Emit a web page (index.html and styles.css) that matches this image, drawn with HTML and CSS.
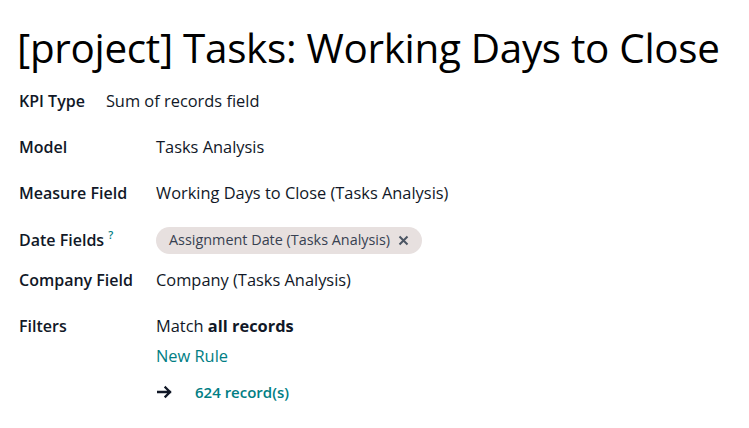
FILE: index.html
```html
<!DOCTYPE html>
<html>
<head>
<meta charset="utf-8">
<link rel="stylesheet" href="styles.css">
</head>
<body>
<div class="sheet">
  <h1 class="title">[project] Tasks: Working Days to Close</h1>
  <div class="kpi-row">
    <span class="label">KPI Type</span>
    <span class="value">Sum of records field</span>
  </div>
  <div class="fields">
    <div class="row">
      <div class="label">Model</div>
      <div class="value">Tasks Analysis</div>
    </div>
    <div class="row">
      <div class="label">Measure Field</div>
      <div class="value">Working Days to Close (Tasks Analysis)</div>
    </div>
    <div class="row row-tags">
      <div class="label">Date Fields <sup class="help">?</sup></div>
      <div class="value">
        <span class="tag">Assignment Date (Tasks Analysis) <svg class="tag-x" width="11" height="11" viewBox="0 0 11 11"><path d="M1.5 1.5L9.5 9.5M9.5 1.5L1.5 9.5" stroke="#4b5563" stroke-width="2" fill="none"/></svg></span>
      </div>
    </div>
    <div class="row">
      <div class="label">Company Field</div>
      <div class="value">Company (Tasks Analysis)</div>
    </div>
    <div class="row row-filters">
      <div class="label">Filters</div>
      <div class="value filters">
        <div>Match <b>all records</b></div>
        <div class="link new-rule">New Rule</div>
        <div class="count">
          <svg class="arrow" width="15" height="14" viewBox="0 0 15 14"><path d="M1 7H13M8.5 2.5L13 7L8.5 11.5" fill="none" stroke="#111827" stroke-width="2.3" stroke-linecap="square"/></svg>
          <span class="link count-text">624 record(s)</span>
        </div>
      </div>
    </div>
  </div>
</div>
</body>
</html>
```
FILE: styles.css
```css
html, body {
  margin: 0;
  padding: 0;
  background: #ffffff;
}
body {
  font-family: "Open Sans", "Noto Sans", sans-serif;
  color: #111827;
  font-size: 16.4px;
}
.sheet {
  padding: 24px 0 0 19px;
}
.title {
  margin: 0 0 18px -2px;
  font-weight: 400;
  font-size: 40.4px;
  line-height: 48px;
  letter-spacing: -0.3px;
  color: #000;
}
.kpi-row {
  display: flex;
  gap: 21px;
  align-items: center;
  height: 22px;
  line-height: 22px;
  margin-bottom: 24px;
}
.label {
  font-weight: 600;
  font-size: 16px;
}
.fields {
  display: flex;
  flex-direction: column;
}
.row {
  display: grid;
  grid-template-columns: 137px 1fr;
  align-items: center;
  min-height: 22px;
  line-height: 22px;
  margin-bottom: 24px;
}
.row-tags {
  margin-bottom: 18px;
}
.help {
  color: #017e84;
  font-size: 11px;
  font-weight: 600;
  vertical-align: 7px;
  line-height: 0;
}
.tag {
  display: inline-flex;
  align-items: center;
  gap: 8px;
  background: #e7e0df;
  color: #374151;
  border-radius: 14px;
  height: 27px;
  margin: -2.5px 0;
  padding: 0 13px 0 13px;
  font-size: 14.4px;
  font-weight: 500;
}
.tag-x {
  display: block;
}
.row-filters {
  align-items: start;
}
.filters {
  display: flex;
  flex-direction: column;
}
.filters > div {
  line-height: 22px;
}
.link {
  color: #017e84;
}
.new-rule {
  margin-top: 8px;
}
.count {
  margin-top: 14px;
  display: flex;
  align-items: center;
}
.arrow {
  margin-left: 1px;
  margin-right: 23px;
}
.count-text {
  font-weight: 600;
  font-size: 15px;
}
```
